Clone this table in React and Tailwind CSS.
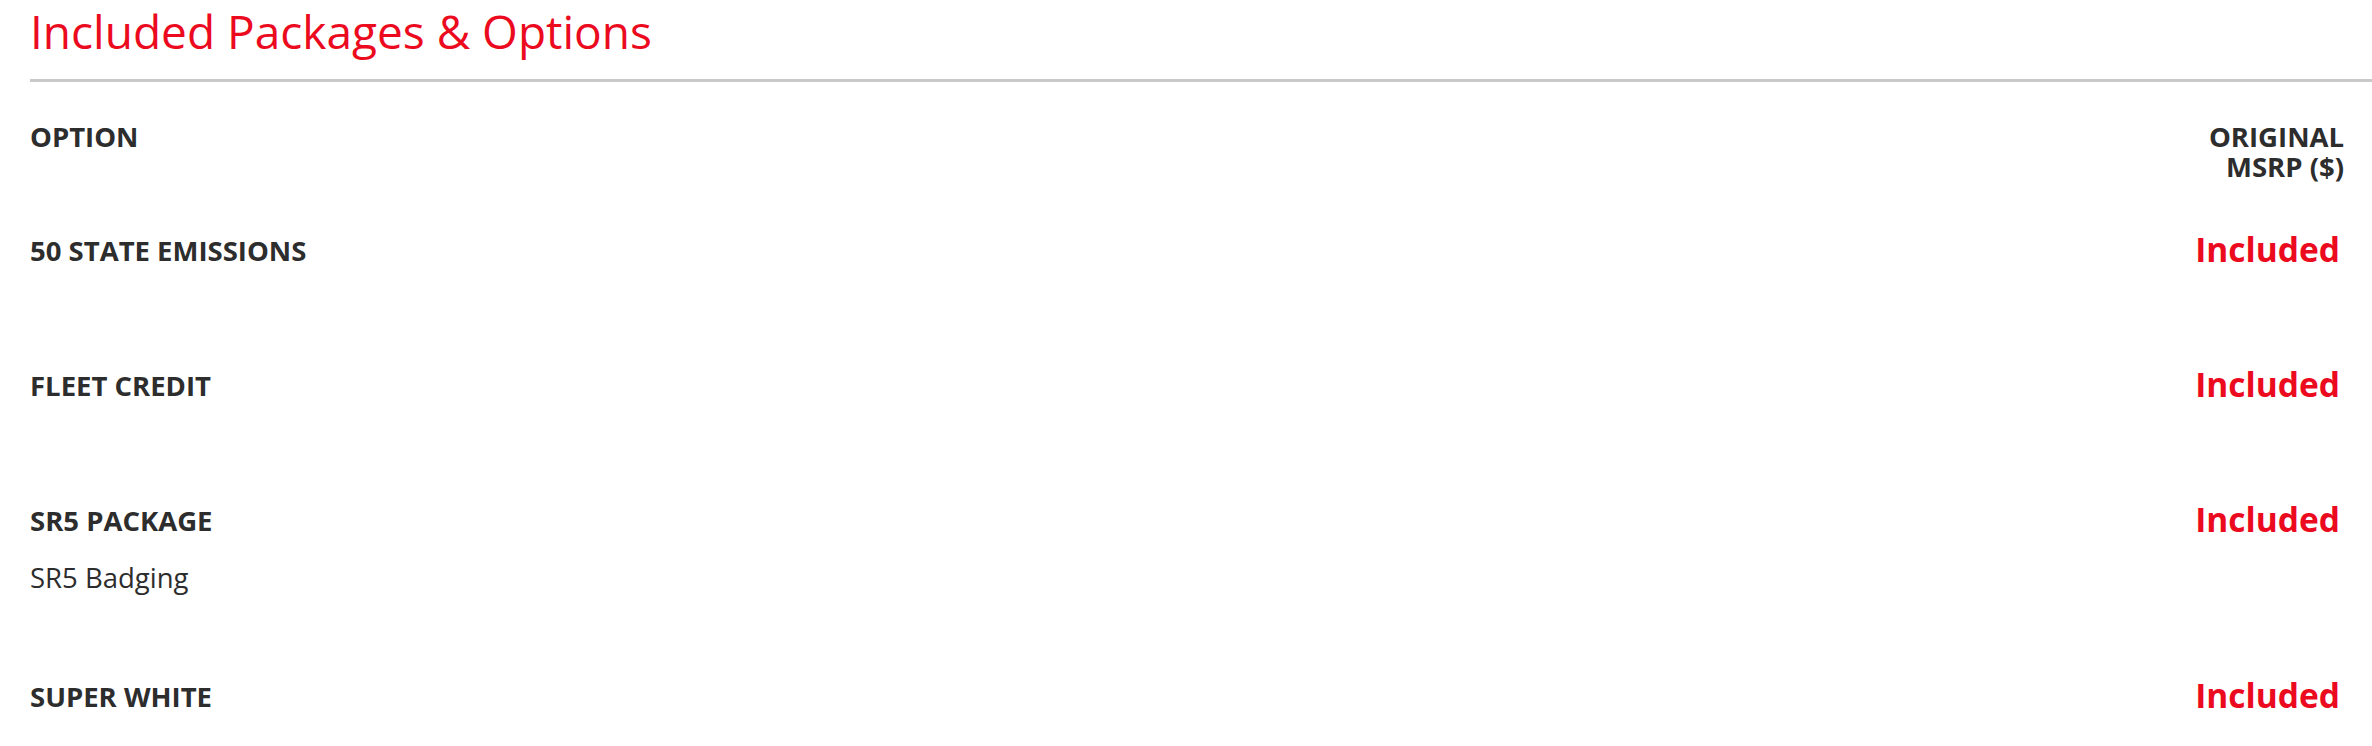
import React from "react";

const RED = "text-[#eb0a1e]";

const rows = [
  { name: "50 STATE EMISSIONS" },
  { name: "FLEET CREDIT" },
  { name: "SR5 PACKAGE", detail: "SR5 Badging" },
  { name: "SUPER WHITE" },
];

export default function App() {
  return (
    <div
      className="bg-white w-full min-h-[746px] pl-[30px] text-[#2d2d2d]"
      style={{ fontFamily: '"Open Sans", "Liberation Sans", sans-serif' }}
    >
      <h2 className={`text-[46px] leading-[62px] font-normal ${RED}`}>
        Included Packages &amp; Options
      </h2>
      <div className="mt-[17px] h-[3px] bg-[#c9c9c9]" />
      <div className="pr-[28px]">
        <div className="flex justify-between items-start pt-[40px] pb-[53px]">
          <div className="text-[27.5px] leading-[30px] font-bold">OPTION</div>
          <div className="text-[27.5px] leading-[30px] font-bold text-right">
            ORIGINAL
            <br />
            MSRP ($)
          </div>
        </div>
        {rows.map((r) => (
          <div
            key={r.name}
            className={`flex justify-between items-start ${r.detail ? "pb-[87px]" : "pb-[103px]"}`}
          >
            <div>
              <div className="text-[27.5px] leading-[32px] font-bold">{r.name}</div>
              {r.detail && (
                <div className="mt-[25px] text-[27.5px] leading-[32px] font-normal">
                  {r.detail}
                </div>
              )}
            </div>
            <div className={`text-[33.5px] leading-[28px] font-bold pr-[4px] ${RED}`}>
              Included
            </div>
          </div>
        ))}
      </div>
    </div>
  );
}
